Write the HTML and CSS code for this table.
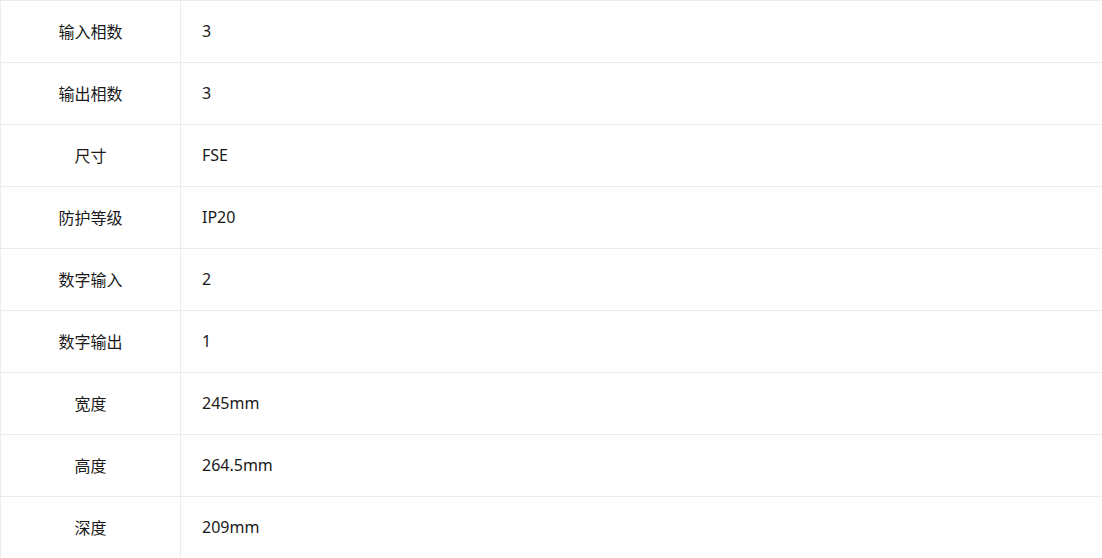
FILE: index.html
```html
<!DOCTYPE html>
<html lang="zh">
<head>
<meta charset="utf-8">
<link rel="stylesheet" href="styles.css">
</head>
<body>
<div class="spec">
  <div class="row"><div class="label">输入相数</div><div class="value">3</div></div>
  <div class="row"><div class="label">输出相数</div><div class="value">3</div></div>
  <div class="row"><div class="label">尺寸</div><div class="value">FSE</div></div>
  <div class="row"><div class="label">防护等级</div><div class="value">IP20</div></div>
  <div class="row"><div class="label">数字输入</div><div class="value">2</div></div>
  <div class="row"><div class="label">数字输出</div><div class="value">1</div></div>
  <div class="row"><div class="label">宽度</div><div class="value">245mm</div></div>
  <div class="row"><div class="label">高度</div><div class="value">264.5mm</div></div>
  <div class="row"><div class="label">深度</div><div class="value">209mm</div></div>
</div>
</body>
</html>
```
FILE: styles.css
```css
html, body {
  margin: 0;
  padding: 0;
  background: #fff;
}
body {
  font-family: "Noto Sans", "Noto Sans CJK SC", sans-serif;
  font-size: 16px;
  color: #1a1a1a;
  overflow: hidden;
}
.spec {
  border-left: 1px solid #ececec;
}
.row {
  display: flex;
  height: 61px;
  border-top: 1px solid #ececec;
}
.label {
  width: 180px;
  flex: none;
  box-sizing: border-box;
  display: flex;
  align-items: center;
  justify-content: center;
  padding-bottom: 2px;
  border-right: 1px solid #ececec;
}
.value {
  flex: 1;
  display: flex;
  align-items: center;
  padding-left: 21px;
  padding-bottom: 2px;
}
```
